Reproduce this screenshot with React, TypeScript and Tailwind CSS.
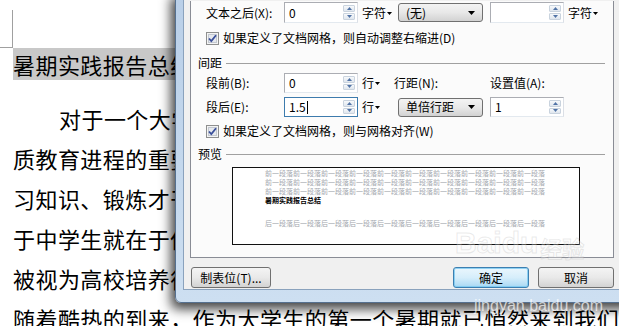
import React from "react";

function Caret() {
  return (
    <svg width="6" height="4" viewBox="0 0 6 4" className="ml-[1px] mt-[2px]">
      <path d="M0 0H5L2.5 3z" fill="#000" />
    </svg>
  );
}

function Spin() {
  return (
    <div className="flex h-full w-[12px] flex-col gap-px py-[2px]">
      <div className="flex flex-1 items-center justify-center rounded-[1px] border border-[#c9d3de] bg-gradient-to-b from-[#f7f9fb] to-[#dfe6ee]">
        <svg width="5" height="3" viewBox="0 0 5 3">
          <path d="M2.5 0L5 3H0z" fill="#5173a6" />
        </svg>
      </div>
      <div className="flex flex-1 items-center justify-center rounded-[1px] border border-[#c9d3de] bg-gradient-to-b from-[#f7f9fb] to-[#dfe6ee]">
        <svg width="5" height="3" viewBox="0 0 5 3">
          <path d="M0 0H5L2.5 3z" fill="#5173a6" />
        </svg>
      </div>
    </div>
  );
}

function NumBox({ value, focused }: { value: string; focused?: boolean }) {
  return (
    <div
      className={
        focused
          ? "flex h-full w-[74px] items-center border border-[#3d7bad] bg-white pl-[4px] pr-[2px]"
          : "flex h-full w-[74px] items-center border border-[#abadb3] border-b-[#e3e9ef] border-r-[#dbdfe6] bg-white pl-[4px] pr-[2px]"
      }
    >
      <span className="flex flex-1 items-center">
        {value}
        {focused && <span className="ml-[1px] h-[13px] w-px bg-black" />}
      </span>
      <Spin />
    </div>
  );
}

function Unit({ label }: { label: string }) {
  return (
    <div className="flex w-[36px] items-center pl-[4px]">
      <span>{label}</span>
      <Caret />
    </div>
  );
}

function Combo({ label }: { label: string }) {
  return (
    <div className="ml-[4px] flex h-[19px] w-[85px] items-center rounded-[3px] border border-[#707070] bg-gradient-to-b from-[#f3f3f3] via-[#e8e8e8] to-[#d2d2d2] pl-[7px] pr-[7px]">
      <span className="flex-1">{label}</span>
      <svg width="7" height="4" viewBox="0 0 7 4">
        <path d="M0 0H7L3.5 4z" fill="#000" />
      </svg>
    </div>
  );
}

function Check({ label }: { label: string }) {
  return (
    <div className="flex h-[16px] items-center gap-[4px] pl-[15px]">
      <svg width="13" height="13" viewBox="0 0 13 13">
        <rect x="0.5" y="0.5" width="12" height="12" fill="#f4f4f4" stroke="#8e8f8f" />
        <rect x="2.5" y="2.5" width="8" height="8" fill="#e6e9ee" stroke="#c3c8d0" />
        <path d="M3 6.5L5.3 9L10 3.2" fill="none" stroke="#3a4f9a" strokeWidth="1.8" />
      </svg>
      <span>{label}</span>
    </div>
  );
}

function Section({ label }: { label: string }) {
  return (
    <div className="flex h-[16px] items-center pl-[7px]">
      <span>{label}</span>
      <div className="ml-[4px] mr-[8px] h-px flex-1 bg-[#a0a0a0]" />
    </div>
  );
}

const before = "前一段落".repeat(10);
const after = "后一段落".repeat(10);

function Preview() {
  return (
    <div className="ml-[41px] mt-[5px] h-[78px] w-[348px] border border-[#111] bg-white pl-[32px] pt-px text-[7px] leading-[9px]">
      <div className="text-[#a3a7ae]">{before}</div>
      <div className="text-[#a3a7ae]">{before}</div>
      <div className="text-[#a3a7ae]">{before}</div>
      <div className="font-bold text-black">暑期实践报告总结</div>
      <div className="mt-[14px] text-[#a3a7ae]">{after}</div>
    </div>
  );
}

function Dialog() {
  return (
    <div className="absolute left-[175px] top-[-9px] h-[312px] w-[480px] rounded-b-[6px] border border-[#55708f] bg-gradient-to-b from-[#b9cfe8] to-[#cddff1] pb-[5px] pl-[7px] shadow-[-4px_6px_12px_rgba(0,0,0,0.75)]">
      <div className="flex h-[298px] flex-col border border-[#8aa2bd] bg-[#f0f0f0] pt-[8px] font-['Noto_Sans_CJK_SC',sans-serif] text-[12px] leading-[16px] text-black">
        {/* tab page */}
        <div className="ml-[6px] flex h-[257px] w-[424px] flex-col border-x border-b border-[#898c95] bg-[#fbfbfb]">
          <div className="mt-[1px] flex h-[21px] items-center pl-[15px]">
            <span className="w-[78px]">文本之后(X):</span>
            <NumBox value="0" />
            <Unit label="字符" />
            <Combo label="(无)" />
            <div className="ml-[7px] h-full">
              <NumBox value="" />
            </div>
            <Unit label="字符" />
          </div>
          <div className="mt-[7px]">
            <Check label="如果定义了文档网格，则自动调整右缩进(D)" />
          </div>
          <div className="mt-[9px]">
            <Section label="间距" />
          </div>
          <div className="mt-[2px] flex h-[20px] items-center pl-[15px]">
            <span className="w-[78px]">段前(B):</span>
            <NumBox value="0" />
            <Unit label="行" />
            <span className="w-[96px]">行距(N):</span>
            <span>设置值(A):</span>
          </div>
          <div className="mt-[4px] flex h-[20px] items-center pl-[15px]">
            <span className="w-[78px]">段后(E):</span>
            <NumBox value="1.5" focused />
            <Unit label="行" />
            <Combo label="单倍行距" />
            <div className="ml-[7px] h-full">
              <NumBox value="1" />
            </div>
          </div>
          <div className="mt-[6px]">
            <Check label="如果定义了文档网格，则与网格对齐(W)" />
          </div>
          <div className="mt-[7px]">
            <Section label="预览" />
          </div>
          <Preview />
        </div>

        {/* buttons */}
        <div className="mt-[9px] flex h-[21px] pl-[7px]">
          <div className="flex w-[80px] items-center justify-center rounded-[3px] border border-[#707070] bg-gradient-to-b from-[#f4f4f4] via-[#e9e9e9] to-[#d3d3d3]">
            制表位(T)...
          </div>
          <div className="ml-[182px] flex w-[76px] items-center justify-center rounded-[3px] border border-[#3c7fb1] bg-gradient-to-b from-[#eaf6fd] via-[#d6eefb] to-[#a9d9f4] shadow-[inset_0_0_0_1px_rgba(120,200,240,0.8)]">
            确定
          </div>
          <div className="ml-[9px] flex w-[76px] items-center justify-center rounded-[3px] border border-[#707070] bg-gradient-to-b from-[#f4f4f4] via-[#e9e9e9] to-[#d3d3d3]">
            取消
          </div>
        </div>
      </div>
    </div>
  );
}

const lines = [
  { text: "对于一个大学生而言，暑期社会实践是推进素", indent: true },
  { text: "质教育进程的重要手段，是大学生学习知识的", indent: false },
  { text: "习知识、锻炼才干的有效途径，更是大学生服", indent: false },
  { text: "于中学生就在于他们已经走出了校门，是大学", indent: false },
  { text: "被视为高校培养德智体美全面发展的人才的重", indent: false },
  { text: "随着酷热的到来，作为大学生的第一个暑期就已悄然来到我们身边", indent: false },
];

export default function App() {
  return (
    <div className="relative h-[326px] w-[619px] overflow-hidden bg-white">
      <div className="flex flex-col font-['Noto_Sans_CJK_SC',sans-serif] text-[22px] tracking-[0.45px] text-black">
        <div className="mt-[10px] h-[38px] w-[13px] border-b border-r border-[#a0a0a0]" />
        <div className="h-[33px] whitespace-nowrap pl-[13px] leading-[33px]">
          <span className="bg-[#c8c8c8]">暑期实践报告总结</span>
        </div>
        <div className="mt-[17px] flex flex-col">
          {lines.map((l, i) => (
            <div
              key={i}
              className={
                l.indent
                  ? "h-[40px] whitespace-nowrap pl-[59px] leading-[40px]"
                  : "h-[40px] whitespace-nowrap pl-[13px] leading-[40px]"
              }
            >
              {l.text}
            </div>
          ))}
        </div>
      </div>

      <Dialog />

      {/* watermark */}
      <div className="pointer-events-none absolute left-[455px] top-[228px] flex items-end font-['Liberation_Sans',sans-serif] text-[30px] font-bold leading-none text-white/30 [-webkit-text-stroke:1px_rgba(170,170,170,0.25)]">
        <span>Baidu</span>
        <span className="ml-[2px] font-['Noto_Sans_CJK_SC',sans-serif] text-[22px]">经验</span>
      </div>
      <div className="pointer-events-none absolute left-[474px] top-[298px] font-['Liberation_Sans',sans-serif] text-[16px] leading-none text-white/70">
        jingyan.baidu.com
      </div>
    </div>
  );
}
